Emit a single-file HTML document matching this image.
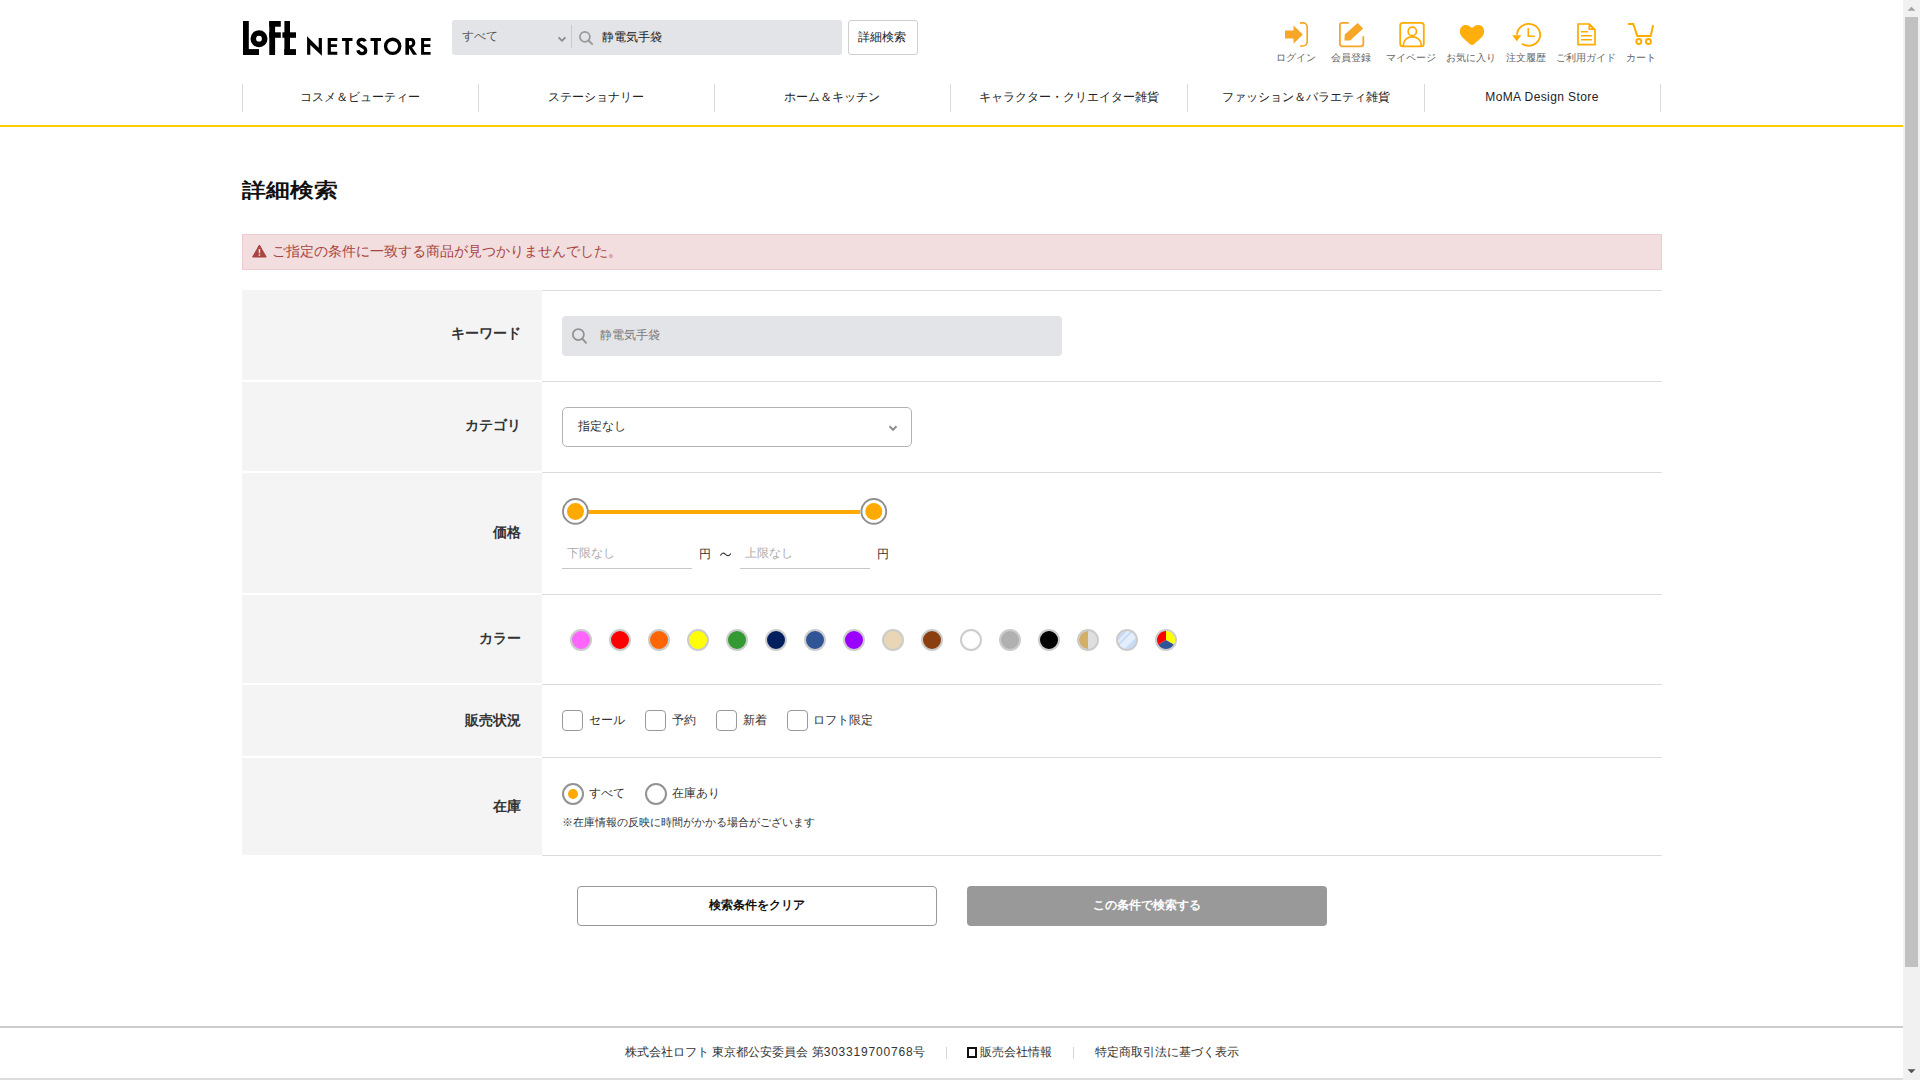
<!DOCTYPE html>
<html lang="ja">
<head>
<meta charset="utf-8">
<title>詳細検索 | LOFT NETSTORE</title>
<style>
html,body{margin:0;padding:0;}
body{width:1920px;height:1080px;overflow:hidden;position:relative;background:#fff;font-family:"Liberation Sans",sans-serif;color:#333;}
.a{position:absolute;}
.t{position:absolute;white-space:nowrap;line-height:1;}
/* header */
#search{left:452px;top:20px;width:390px;height:35px;background:#e3e4e7;border-radius:3px;}
#detailbtn{left:848px;top:20px;width:68px;height:33px;border:1px solid #cfcfcf;border-radius:3px;background:#fff;}
.nav{top:84px;height:28px;border-left:1px solid #d9d9d9;}
.navt{font-size:12px;color:#222;top:91px;text-align:center;}
#yline{left:0;top:125px;width:1903px;height:2px;background:#fdcd00;}
.ilab{font-size:10px;color:#666;top:53px;}
/* scrollbar */
#sb{left:1903px;top:0;width:17px;height:1080px;background:#f1f1f1;}
#thumb{left:1905px;top:17px;width:13px;height:950px;background:#c1c1c1;}
/* content */
#title{left:242px;top:181.3px;transform:scaleY(0.84);transform-origin:0 0;font-size:23.5px;font-weight:bold;color:#111;}
#alert{left:242px;top:234px;width:1418px;height:34px;background:#f2dede;border:1px solid #ebccd1;}
.lab{left:242px;width:300px;background:#f4f4f4;}
.labt{font-size:14px;font-weight:bold;color:#333;right:1399px;}
.bd{left:542px;width:1120px;height:1px;background:#dcdcdc;}
.vt{font-size:12px;color:#333;}
.knob{width:22px;height:22px;border:2px solid #8f8f8f;border-radius:50%;background:#fff;}
.knob::after{content:"";position:absolute;left:2.5px;top:2.5px;width:17px;height:17px;border-radius:50%;background:#ffaa00;}
.sw{top:629px;width:18px;height:18px;border:2px solid #cccccc;border-radius:50%;}
.cb{top:710px;width:19px;height:19px;border:1px solid #9a9a9a;border-radius:4px;background:#fff;}
.rd{top:783px;width:18px;height:18px;border:2px solid #939393;border-radius:50%;background:#fff;}
</style>
</head>
<body>
<!-- logo -->
<svg class="a" style="left:0;top:0" width="460" height="70" viewBox="0 0 460 70">
  <g fill="#000">
    <rect x="243" y="21" width="5.8" height="34"/>
    <rect x="243" y="49.1" width="16" height="5.9"/>
    <circle cx="259" cy="38.7" r="5.7" fill="none" stroke="#000" stroke-width="5.6"/>
    <rect x="269.3" y="21" width="5.8" height="34"/>
    <rect x="269.3" y="21" width="11.5" height="5.7"/>
    <rect x="269.3" y="32.3" width="11.5" height="5.5"/>
    <rect x="284.4" y="21" width="5.6" height="34"/>
    <rect x="282.4" y="32.3" width="13.6" height="5.5"/>
    <rect x="284.4" y="49.1" width="11.6" height="5.9"/>
    <path d="M307.1 36.2 L318.7 47.8 V38.1 H321.9 V55.8 L310.3 45.1 V54.7 H307.1 Z"/>
    <path d="M327.7 38.1 H337.3 V40.9 H330.9 V44.2 H336.9 V47 H330.9 V51.8 H337.3 V54.7 H327.7 Z"/>
    <path d="M342 38.1 H352.5 V40.9 H348.9 V54.7 H345.4 V40.9 H342 Z"/>
    <path d="M365.3 41.3 C364.6 39.9 363.4 39.3 361.8 39.3 C359.7 39.3 358.1 40.6 358.1 42.6 C358.1 44.6 359.8 45.4 362.2 46.4 C364.4 47.3 365.7 48.4 365.7 50.5 C365.7 52.5 364.1 53.6 361.9 53.6 C359.7 53.6 358.4 52.3 357.8 50.3" fill="none" stroke="#000" stroke-width="3.3"/>
    <path d="M370.5 38.1 H381 V40.9 H377.7 V54.7 H374 V40.9 H370.5 Z"/>
    <circle cx="392.65" cy="46.3" r="7.1" fill="none" stroke="#000" stroke-width="3.35"/>
    <path fill-rule="evenodd" d="M405.4 38.1 H410.8 C413.6 38.1 415.3 40.1 415.3 42.7 C415.3 45.1 414 46.8 412.1 47.4 L417.1 54.7 H413.1 L409 48.3 V54.7 H405.4 Z M409 40.9 V45.3 H410.5 C411.6 45.3 412.2 44.3 412.2 43.1 C412.2 41.8 411.6 40.9 410.5 40.9 Z"/>
    <path d="M421.1 38.1 H430.6 V40.9 H424.1 V44.3 H430.3 V47 H424.1 V51.9 H430.6 V54.7 H421.1 Z"/>
  </g>
</svg>
<div class="a" id="search"></div>
<div class="t" style="left:462px;top:30px;font-size:12px;color:#555;">すべて</div>
<svg class="a" style="left:440px;top:10px" width="180" height="50" viewBox="440 10 180 50">
  <path d="M558.6 37.4 L562 40.8 L565.4 37.4" fill="none" stroke="#8a8a8a" stroke-width="1.8"/>
  <rect x="571" y="25" width="1" height="23" fill="#c9c9ca"/>
  <circle cx="584.9" cy="36.8" r="5" fill="none" stroke="#999" stroke-width="1.7"/>
  <path d="M588.6 40.5 L592.2 44.1" stroke="#999" stroke-width="1.9" stroke-linecap="round"/>
</svg>
<div class="t" style="left:602px;top:31px;font-size:12px;color:#222;">静電気手袋</div>
<div class="a" id="detailbtn"></div>
<div class="t" style="left:858px;top:31px;font-size:12px;color:#222;">詳細検索</div>
<!-- header icons -->
<svg class="a" style="left:1260px;top:10px" width="420" height="45" viewBox="1260 10 420 45">
  <g fill="#f7a628">
    <path d="M1285 30.4 H1293.5 V25.5 L1302.8 34.4 L1293.5 43.7 V38.4 H1285 Z"/>
  </g>
  <path d="M1300 22.9 H1303 A4.2 4.2 0 0 1 1307.2 27.1 V41.8 A4.2 4.2 0 0 1 1303 46 H1300" fill="none" stroke="#f7a628" stroke-width="1.7"/>
  <path d="M1348.8 22.9 H1342.2 A2.3 2.3 0 0 0 1339.9 25.2 V44 A2.3 2.3 0 0 0 1342.2 46.3 H1361 A2.3 2.3 0 0 0 1363.3 44 V36.2" fill="none" stroke="#f7a628" stroke-width="1.8"/>
  <path d="M1344.8 34.4 L1357.7 22.9 L1363.1 28.6 L1350.2 40.6 H1344.4 Z" fill="#f7a628"/>
  <rect x="1400.2" y="22.9" width="23.6" height="23.5" rx="2.6" fill="none" stroke="#ffab00" stroke-width="1.8"/>
  <circle cx="1412.3" cy="31.4" r="4.2" fill="none" stroke="#ffab00" stroke-width="1.7"/>
  <path d="M1403.3 46.4 V45 C1403.3 40 1407.3 36.9 1412.3 36.9 C1417.3 36.9 1421.3 40 1421.3 45 V46.4" fill="none" stroke="#ffab00" stroke-width="1.7"/>
  <path d="M1472 44.9 C1471.2 44.9 1470.5 44.5 1469.8 43.9 L1463.3 38.2 C1461 36.1 1459.9 33.8 1459.9 31.2 C1459.9 27.6 1462.4 24.9 1465.8 24.9 C1468.4 24.9 1470.4 26.3 1472 28.1 C1473.6 26.3 1475.6 24.9 1478.2 24.9 C1481.6 24.9 1484.1 27.6 1484.1 31.2 C1484.1 33.8 1483 36.1 1480.7 38.2 L1474.2 43.9 C1473.5 44.5 1472.8 44.9 1472 44.9 Z" fill="#ffae0c"/>
  <path d="M1517 34.85 A11.6 10.9 0 1 1 1521.9 43.75" fill="none" stroke="#ffab00" stroke-width="1.9"/>
  <path d="M1512.2 35.2 H1521.3 L1516.8 41.2 Z" fill="#ffab00"/>
  <path d="M1528.3 28.3 V36.3 H1534.8" fill="none" stroke="#ffab00" stroke-width="1.6"/>
  <path d="M1578 24 H1589.2 L1595 29.8 V44.7 H1578 Z" fill="none" stroke="#ffab00" stroke-width="1.7"/>
  <path d="M1589.3 24.6 L1594.4 29.2 H1589.3 Z" fill="none" stroke="#ffab00" stroke-width="1.7" stroke-linejoin="round"/>
  <path d="M1581 31.8 H1587.8 M1581 35.8 H1591.8 M1581 39.8 H1591.8" stroke="#ffab00" stroke-width="1.6"/>
  <path d="M1628 24 H1633.3 L1637.3 36.1 H1650.7 L1653.1 25.3" fill="none" stroke="#ffab00" stroke-width="2"/>
  <circle cx="1638.8" cy="41.5" r="2.5" fill="none" stroke="#ffab00" stroke-width="1.9"/>
  <circle cx="1648.4" cy="41.5" r="2.5" fill="none" stroke="#ffab00" stroke-width="1.9"/>
</svg>
<div class="t ilab" style="left:1276px;">ログイン</div>
<div class="t ilab" style="left:1331px;">会員登録</div>
<div class="t ilab" style="left:1386px;">マイページ</div>
<div class="t ilab" style="left:1446px;">お気に入り</div>
<div class="t ilab" style="left:1506px;">注文履歴</div>
<div class="t ilab" style="left:1556px;">ご利用ガイド</div>
<div class="t ilab" style="left:1626px;">カート</div>
<!-- nav -->
<div class="a nav" style="left:242px;width:236px;"></div>
<div class="a nav" style="left:478px;width:236px;"></div>
<div class="a nav" style="left:714px;width:236px;"></div>
<div class="a nav" style="left:950px;width:237px;"></div>
<div class="a nav" style="left:1187px;width:237px;"></div>
<div class="a nav" style="left:1424px;width:236px;"></div>
<div class="a nav" style="left:1660px;width:1px;"></div>
<div class="t navt" style="left:242px;width:236px;">コスメ＆ビューティー</div>
<div class="t navt" style="left:478px;width:236px;">ステーショナリー</div>
<div class="t navt" style="left:714px;width:236px;">ホーム＆キッチン</div>
<div class="t navt" style="left:950px;width:237px;">キャラクター・クリエイター雑貨</div>
<div class="t navt" style="left:1187px;width:237px;">ファッション＆バラエティ雑貨</div>
<div class="t navt" style="left:1424px;width:236px;letter-spacing:0.4px;color:#222;">MoMA Design Store</div>
<div class="a" id="yline"></div>
<div class="a" id="sb"></div>
<div class="a" id="thumb"></div>
<svg class="a" style="left:1903px;top:0" width="17" height="17" viewBox="0 0 17 17"><path d="M4.5 10.8 L8.5 6.8 L12.5 10.8 Z" fill="#a3a3a3"/></svg>
<svg class="a" style="left:1903px;top:1063px" width="17" height="17" viewBox="0 0 17 17"><path d="M4.5 6.2 L8.5 10.2 L12.5 6.2 Z" fill="#505050"/></svg>

<div class="t" id="title">詳細検索</div>
<div class="a" id="alert"></div>
<svg class="a" style="left:252px;top:244px" width="16" height="14" viewBox="0 0 16 14">
  <path d="M7.4 1 L14.2 13 H0.6 Z" fill="#a94442" stroke="#a94442" stroke-width="1" stroke-linejoin="round"/>
  <rect x="6.7" y="5" width="1.5" height="4.3" fill="#f2dede"/>
  <rect x="6.7" y="10.3" width="1.5" height="1.5" fill="#f2dede"/>
</svg>
<div class="t" style="left:272px;top:244px;font-size:14px;color:#a94442;">ご指定の条件に一致する商品が見つかりませんでした。</div>

<!-- table -->
<div class="a lab" style="top:290px;height:90px;"></div>
<div class="a lab" style="top:382px;height:89px;"></div>
<div class="a lab" style="top:473px;height:120px;"></div>
<div class="a lab" style="top:595px;height:88px;"></div>
<div class="a lab" style="top:685px;height:71px;"></div>
<div class="a lab" style="top:758px;height:97px;"></div>
<div class="a bd" style="top:290px;"></div>
<div class="a bd" style="top:381px;"></div>
<div class="a bd" style="top:472px;"></div>
<div class="a bd" style="top:594px;"></div>
<div class="a bd" style="top:684px;"></div>
<div class="a bd" style="top:757px;"></div>
<div class="a bd" style="top:855px;"></div>
<div class="t labt" style="top:326px;">キーワード</div>
<div class="t labt" style="top:418px;">カテゴリ</div>
<div class="t labt" style="top:525px;">価格</div>
<div class="t labt" style="top:631px;">カラー</div>
<div class="t labt" style="top:713px;">販売状況</div>
<div class="t labt" style="top:799px;">在庫</div>

<!-- keyword -->
<div class="a" style="left:562px;top:316px;width:500px;height:40px;background:#e3e4e7;border-radius:4px;"></div>
<svg class="a" style="left:562px;top:316px" width="40" height="40" viewBox="562 316 40 40">
  <circle cx="578.35" cy="334.55" r="5.55" fill="none" stroke="#929292" stroke-width="1.75"/>
  <path d="M582.5 338.9 L586 342.8" stroke="#929292" stroke-width="1.9" stroke-linecap="round"/>
</svg>
<div class="t" style="left:600px;top:329px;font-size:12px;color:#7a7a7a;">静電気手袋</div>

<!-- category -->
<div class="a" style="left:562px;top:407px;width:348px;height:38px;border:1px solid #b3b3b3;border-radius:5px;background:#fff;"></div>
<div class="t vt" style="left:578px;top:420px;">指定なし</div>
<svg class="a" style="left:880px;top:415px" width="25" height="25" viewBox="880 415 25 25">
  <path d="M889.5 426.3 L893 429.8 L896.5 426.3" fill="none" stroke="#8f8f8f" stroke-width="2"/>
</svg>

<!-- price -->
<div class="a" style="left:588px;top:510px;width:272px;height:4px;background:#ffaa00;"></div>
<svg class="a" style="left:555px;top:490px" width="340" height="45" viewBox="555 490 340 45">
  <circle cx="575.4" cy="511.4" r="12.4" fill="#fff" stroke="#8f8f8f" stroke-width="1.9"/>
  <circle cx="575.5" cy="511.5" r="8.5" fill="#ffaa00"/>
  <circle cx="873.8" cy="511.4" r="12.4" fill="#fff" stroke="#8f8f8f" stroke-width="1.9"/>
  <circle cx="873.8" cy="511.5" r="8.5" fill="#ffaa00"/>
</svg>
<div class="a" style="left:562px;top:568px;width:130px;height:1px;background:#c8c8c8;"></div>
<div class="a" style="left:740px;top:568px;width:130px;height:1px;background:#c8c8c8;"></div>
<div class="t" style="left:567px;top:547px;font-size:12px;color:#aaa;">下限なし</div>
<div class="t" style="left:745px;top:547px;font-size:12px;color:#aaa;">上限なし</div>
<div class="t vt" style="left:699px;top:548px;">円</div>
<svg class="a" style="left:715px;top:545px" width="20" height="15" viewBox="715 545 20 15">
  <path d="M720.4 555.6 C721.6 552.8 723.6 552.6 725.2 554.1 C726.8 555.6 728.8 557 730.8 553.4" fill="none" stroke="#333" stroke-width="1.1"/>
</svg>
<div class="t vt" style="left:877px;top:548px;">円</div>

<!-- colors -->
<div class="a sw" style="left:570px;background:#ff66ff;"></div>
<div class="a sw" style="left:609px;background:#ff0000;"></div>
<div class="a sw" style="left:648px;background:#ff6600;"></div>
<div class="a sw" style="left:687px;background:#ffff00;"></div>
<div class="a sw" style="left:726px;background:#339933;"></div>
<div class="a sw" style="left:765px;background:#001f5f;"></div>
<div class="a sw" style="left:804px;background:#2f5597;"></div>
<div class="a sw" style="left:843px;background:#9900ff;"></div>
<div class="a sw" style="left:882px;background:#e8d6b6;"></div>
<div class="a sw" style="left:921px;background:#8b3e0f;"></div>
<div class="a sw" style="left:960px;background:#ffffff;"></div>
<div class="a sw" style="left:999px;background:#b0b0b0;"></div>
<div class="a sw" style="left:1038px;background:#000000;"></div>
<div class="a sw" style="left:1077px;background:radial-gradient(circle at 50% 50%,transparent 8.6px,#dcdcdc 9px),linear-gradient(90deg,#d2b068 50%,#dfdfdf 50%);"></div>
<div class="a sw" style="left:1116px;background:linear-gradient(135deg,#c8dcf7 0 27%,#e4eefb 27% 34%,#c8dcf7 34% 43%,#e3edfb 43% 69%,#c8dcf7 69%);"></div>
<div class="a sw" style="left:1155px;background:transparent;"><svg style="position:absolute;left:0;top:0" width="18" height="18" viewBox="0 0 18 18"><path d="M9 9 L9 0 A9 9 0 0 1 16.79 13.5 Z" fill="#ffff00"/><path d="M9 9 L16.79 13.5 A9 9 0 0 1 1.21 13.5 Z" fill="#2f5597"/><path d="M9 9 L1.21 13.5 A9 9 0 0 1 9 0 Z" fill="#ff0000"/></svg></div>

<!-- status -->
<div class="a cb" style="left:562px;"></div>
<div class="t vt" style="left:589px;top:714px;">セール</div>
<div class="a cb" style="left:645px;"></div>
<div class="t vt" style="left:672px;top:714px;">予約</div>
<div class="a cb" style="left:716px;"></div>
<div class="t vt" style="left:743px;top:714px;">新着</div>
<div class="a cb" style="left:787px;"></div>
<div class="t vt" style="left:813px;top:714px;">ロフト限定</div>

<!-- stock -->
<div class="a rd" style="left:562px;"><div style="position:absolute;left:4px;top:4px;width:10px;height:10px;border-radius:50%;background:#ffaa00;"></div></div>
<div class="t vt" style="left:589px;top:787px;">すべて</div>
<div class="a rd" style="left:645px;"></div>
<div class="t vt" style="left:672px;top:787px;">在庫あり</div>
<div class="t" style="left:562px;top:817px;font-size:11px;color:#333;">※在庫情報の反映に時間がかかる場合がございます</div>

<!-- buttons -->
<div class="a" style="left:577px;top:886px;width:358px;height:38px;border:1px solid #999;border-radius:4px;background:#fff;"></div>
<div class="t" style="left:577px;top:899px;width:360px;text-align:center;font-size:12px;font-weight:bold;color:#111;">検索条件をクリア</div>
<div class="a" style="left:967px;top:886px;width:360px;height:40px;border-radius:4px;background:#999;"></div>
<div class="t" style="left:967px;top:899px;width:360px;text-align:center;font-size:12px;font-weight:bold;color:#fff;">この条件で検索する</div>

<!-- footer -->
<div class="a" style="left:0;top:1026px;width:1903px;height:2px;background:#cccccc;"></div>
<div class="a" style="left:0;top:1078px;width:1903px;height:2px;background:#dddddd;"></div>
<div class="t" style="left:625px;top:1046px;font-size:12px;color:#333;">株式会社ロフト 東京都公安委員会 第<span style="letter-spacing:0.8px">303319700768</span>号</div>
<div class="a" style="left:946px;top:1047px;width:1px;height:12px;background:#d5d5d5;"></div>
<div class="a" style="left:967px;top:1047px;width:6px;height:7px;border:2px solid #111;"></div>
<div class="t" style="left:980px;top:1046px;font-size:12px;color:#333;">販売会社情報</div>
<div class="a" style="left:1073px;top:1047px;width:1px;height:12px;background:#d5d5d5;"></div>
<div class="t" style="left:1095px;top:1046px;font-size:12px;color:#333;">特定商取引法に基づく表示</div>
</body>
</html>
